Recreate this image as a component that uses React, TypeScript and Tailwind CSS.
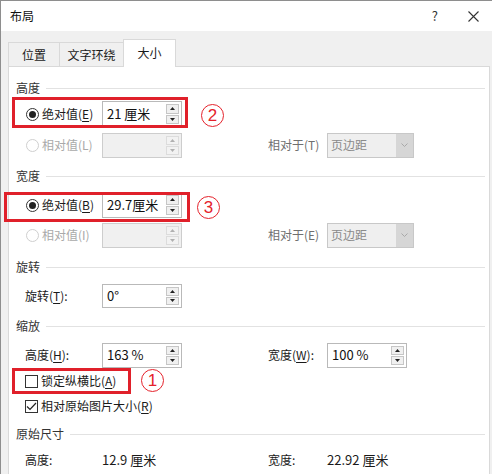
import React from "react";

const Tri = ({ up, color }: { up: boolean; color: string }) => (
  <svg width="5" height="3" viewBox="0 0 5 3">
    {up ? <path d="M0 3 L2.5 0 L5 3 Z" fill={color} /> : <path d="M0 0 L2.5 3 L5 0 Z" fill={color} />}
  </svg>
);

const Spin = ({ value, disabled, h = "h-[25px]" }: { value?: string; disabled?: boolean; h?: string }) => (
  <div
    className={`flex w-[80px] ${h} items-stretch border ${
      disabled ? "border-[#cdcdcd] bg-[#f0f0f0]" : "border-[#b9b9b9] bg-white"
    }`}
  >
    <div className="flex flex-1 items-center pl-[4px] text-[13px] text-[#111]">{value}</div>
    <div className="my-[2px] mr-[2px] flex w-[13px] flex-col gap-px">
      <div
        className={`flex flex-1 items-center justify-center border ${
          disabled ? "border-[#dcdcdc] bg-[#f2f2f2]" : "border-[#c6c6c6] bg-[#f0f0f0]"
        }`}
      >
        <Tri up color={disabled ? "#b0b0b0" : "#222"} />
      </div>
      <div
        className={`flex flex-1 items-center justify-center border ${
          disabled ? "border-[#dcdcdc] bg-[#f2f2f2]" : "border-[#c6c6c6] bg-[#f0f0f0]"
        }`}
      >
        <Tri up={false} color={disabled ? "#b0b0b0" : "#222"} />
      </div>
    </div>
  </div>
);

const Dropdown = () => (
  <div className="flex h-[25px] w-[87px] border border-[#c8c8c8] bg-[#efefef]">
    <div className="flex flex-1 items-center pl-[3px] text-[12px] text-[#8a8a8a]">页边距</div>
    <div className="flex w-[17px] items-center justify-center bg-[#d6d6d6]">
      <svg width="7" height="4" viewBox="0 0 7 4">
        <path d="M0.5 0.5 L3.5 3.5 L6.5 0.5" stroke="#a8a8a8" fill="none" strokeWidth="1" />
      </svg>
    </div>
  </div>
);

const Radio = ({ checked, disabled }: { checked?: boolean; disabled?: boolean }) => (
  <div
    className={`flex h-[13px] w-[13px] items-center justify-center rounded-full border bg-white ${
      disabled ? "border-[#cfcfcf]" : "border-[#333]"
    }`}
  >
    {checked && <div className="h-[7px] w-[7px] rounded-full bg-[#222]" />}
  </div>
);

const Check = ({ checked }: { checked?: boolean }) => (
  <div className="flex h-[13px] w-[13px] items-center justify-center border border-[#333] bg-white">
    {checked && (
      <svg width="11" height="9" viewBox="0 0 11 9">
        <path d="M1 4.5 L4 7.5 L10 1" stroke="#222" strokeWidth="1.2" fill="none" />
      </svg>
    )}
  </div>
);

const Header = ({ title, h }: { title: string; h: string }) => (
  <div className={`flex ${h} items-center gap-[6px] pl-[7px] pr-[4px]`}>
    <span className="text-[12px] text-[#333]">{title}</span>
    <div className="h-px flex-1 bg-[#e2e2e2]" />
  </div>
);

const U = ({ c }: { c: string }) => <span className="underline underline-offset-2">{c}</span>;

const Circle = ({ n, className }: { n: string; className: string }) => (
  <div
    className={`absolute flex h-[23px] w-[23px] items-center justify-center rounded-full border-[1.5px] border-[#e5222b] text-[17px] leading-none text-[#e5222b] font-['Liberation_Sans',sans-serif] ${className}`}
  >
    {n}
  </div>
);

export default function App() {
  return (
    <div className="relative h-[474px] w-[492px] overflow-hidden border-l border-t border-[#8e8e8e] bg-[#f0f0f0] font-['Noto_Sans_CJK_SC','Noto_Sans',sans-serif] text-[12px] text-[#1a1a1a]">
      {/* title bar */}
      <div className="flex h-[30px] items-center bg-white pl-[9px]">
        <span className="text-[12px] text-[#111]">布局</span>
        <div className="flex-1" />
        <span className="mr-[30px] text-[13px] text-[#333]">?</span>
        <svg width="11" height="11" viewBox="0 0 11 11" className="mr-[13px]">
          <path d="M0.5 0.5 L10.5 10.5 M10.5 0.5 L0.5 10.5" stroke="#333" strokeWidth="1.1" />
        </svg>
      </div>

      {/* tabs */}
      <div className="flex h-[35px] items-end pl-[7px]">
        <div className="flex h-[24px] w-[51px] items-center justify-center border-l border-t border-[#d9d9d9] bg-[#f0f0f0]">
          位置
        </div>
        <div className="flex h-[24px] w-[64px] items-center justify-center border-l border-t border-[#d9d9d9] bg-[#f0f0f0]">
          文字环绕
        </div>
        <div className="relative z-10 -mb-px flex h-[28px] w-[53px] items-start justify-center border-l border-r border-t border-[#d9d9d9] bg-white pt-[4px]">
          大小
        </div>
      </div>

      {/* panel */}
      <div className="ml-[7px] mr-[2px] h-[420px] border border-[#d9d9d9] bg-white pt-[11px]">
        <Header title="高度" h="h-[20px]" />
        <div className="flex h-[32px] items-center pl-[16px]">
          <div className="flex w-[77px] items-center gap-[3px] pl-px">
            <Radio checked />
            <span>
              绝对值(<U c="E" />)
            </span>
          </div>
          <Spin value="21 厘米" h="h-[26px]" />
        </div>
        <div className="flex h-[30px] items-center pl-[16px]">
          <div className="flex w-[77px] items-center gap-[3px] pl-px text-[#a9a9a9]">
            <Radio disabled />
            <span>相对值(L)</span>
          </div>
          <div className="w-[166px]">
            <Spin disabled />
          </div>
          <div className="w-[59px] text-[#6f6f6f]">相对于(T)</div>
          <Dropdown />
        </div>

        <Header title="宽度" h="h-[32px]" />
        <div className="flex h-[26px] items-center pl-[16px]">
          <div className="flex w-[77px] items-center gap-[3px] pl-px">
            <Radio checked />
            <span>
              绝对值(<U c="B" />)
            </span>
          </div>
          <Spin value="29.7厘米" h="h-[26px]" />
        </div>
        <div className="flex h-[34px] items-center pl-[16px]">
          <div className="flex w-[77px] items-center gap-[3px] pl-px text-[#a9a9a9]">
            <Radio disabled />
            <span>相对值(I)</span>
          </div>
          <div className="w-[166px]">
            <Spin disabled />
          </div>
          <div className="w-[59px] text-[#6f6f6f]">相对于(E)</div>
          <Dropdown />
        </div>

        <Header title="旋转" h="h-[30px]" />
        <div className="flex h-[28px] items-center pl-[16px]">
          <div className="w-[77px]">
            旋转(<U c="T" />):
          </div>
          <Spin value="0°" h="h-[24px]" />
        </div>

        <Header title="缩放" h="h-[32px]" />
        <div className="flex h-[26px] items-center pl-[16px]">
          <div className="w-[77px]">
            高度(<U c="H" />):
          </div>
          <div className="w-[166px]">
            <Spin value="163 %" h="h-[25px]" />
          </div>
          <div className="w-[59px]">
            宽度(<U c="W" />):
          </div>
          <Spin value="100 %" h="h-[25px]" />
        </div>
        <div className="flex h-[26px] items-center gap-[3px] pl-[16px]">
          <Check />
          <span>
            锁定纵横比(<U c="A" />)
          </span>
        </div>
        <div className="flex h-[24px] items-center gap-[3px] pl-[16px]">
          <Check checked />
          <span>
            相对原始图片大小(<U c="R" />)
          </span>
        </div>

        <Header title="原始尺寸" h="h-[32px]" />
        <div className="flex h-[20px] items-center pl-[16px]">
          <div className="w-[77px]">高度:</div>
          <div className="w-[166px] text-[13px]">12.9 厘米</div>
          <div className="w-[59px]">宽度:</div>
          <div className="text-[13px]">22.92 厘米</div>
        </div>
      </div>

      {/* annotations */}
      <div className="absolute left-[11px] top-[96px] h-[31px] w-[176px] border-[3px] border-[#e0202a]" />
      <div className="absolute left-[3px] top-[191px] h-[30px] w-[186px] border-[3px] border-[#e0202a]" />
      <div className="absolute left-[11px] top-[367px] h-[26px] w-[119px] border-[3px] border-[#e0202a]" />
      <Circle n="2" className="left-[200px] top-[103px]" />
      <Circle n="3" className="left-[196px] top-[195px]" />
      <Circle n="1" className="left-[140px] top-[368px]" />
    </div>
  );
}
